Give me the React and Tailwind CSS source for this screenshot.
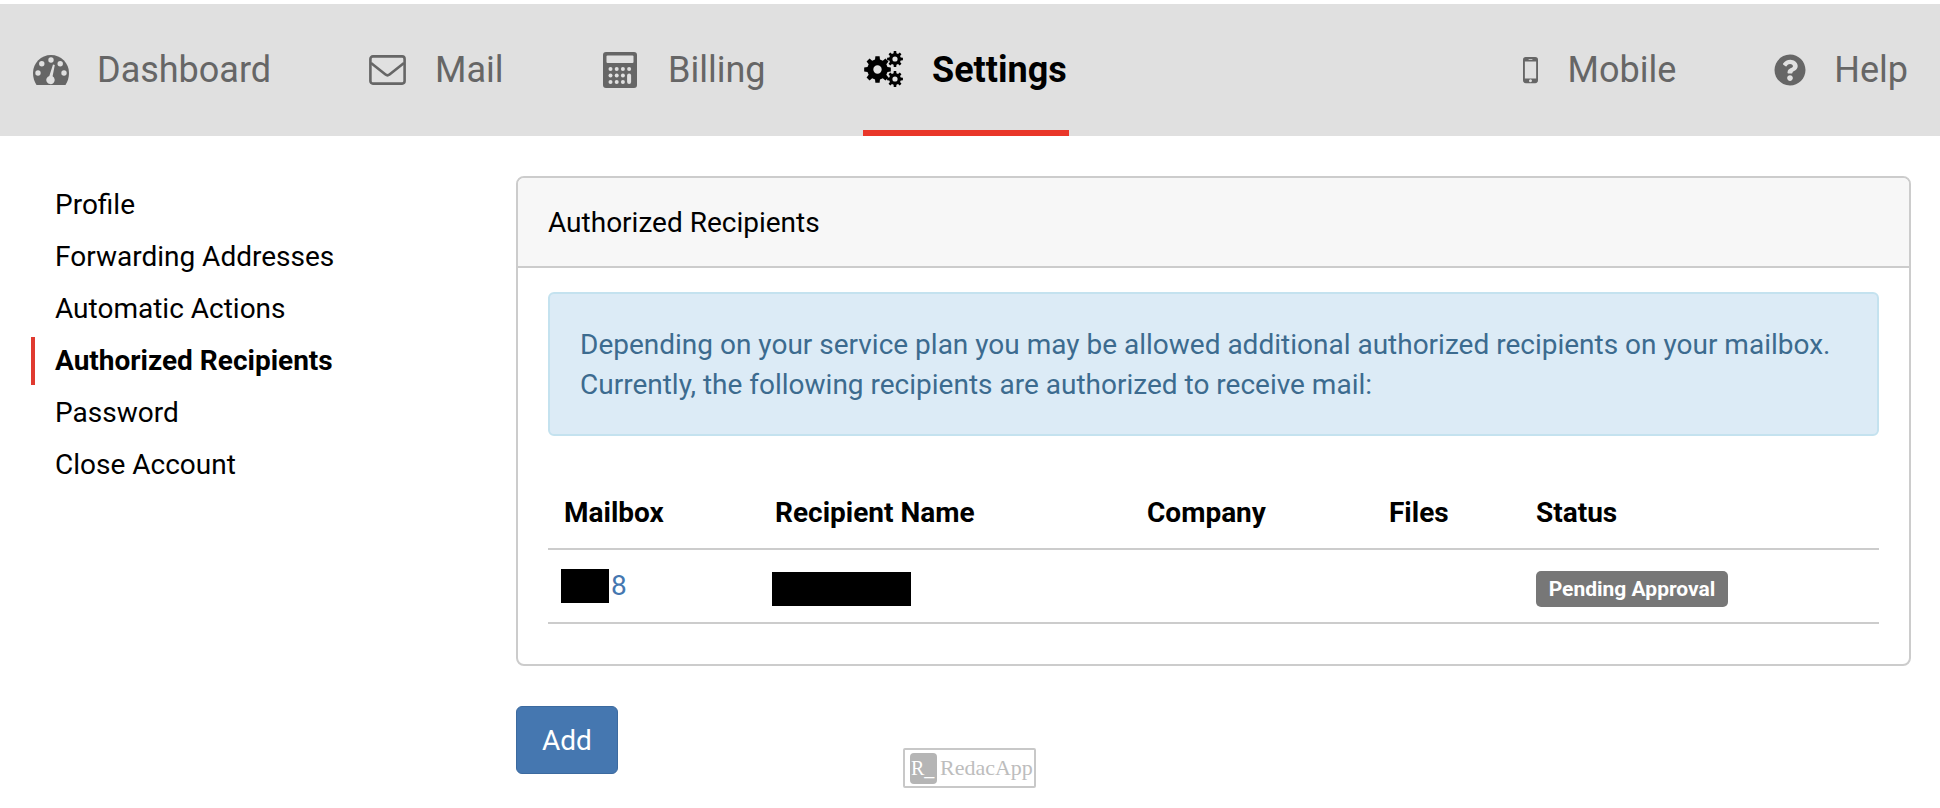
import React from "react";
import { FaQuestionCircle } from "react-icons/fa";

function Gauge() {
  return (
    <svg viewBox="0 0 36 30" className="w-[36px] h-[30px]">
      <path fill="#666" d="M18 0C8 0 0 8 0 18c0 4.500 1.300 8.500 3.500 12h29c2.200-3.500 3.500-7.500 3.500-12C36 8 28 0 18 0z" />
      <g fill="#e0e0e0">
        <circle cx="18" cy="5" r="2.700" />
        <circle cx="8.800" cy="8.800" r="2.700" />
        <circle cx="27.200" cy="8.800" r="2.700" />
        <circle cx="5" cy="18" r="2.700" />
        <circle cx="31" cy="18" r="2.700" />
        <path d="M20 9.500l1.800.5-2.200 11.300a4.200 4.200 0 1 1-3.300-.4z" />
      </g>
    </svg>
  );
}

function Envelope() {
  return (
    <svg viewBox="0 0 37 30" className="w-[37px] h-[30px]">
      <rect x="1.400" y="1.400" width="34.200" height="27.200" rx="2.500" fill="none" stroke="#666" strokeWidth="2.600" />
      <path d="M2 8l14.500 11.500a3.200 3.200 0 0 0 4 0L35 8" fill="none" stroke="#666" strokeWidth="2.600" />
    </svg>
  );
}

function Calc() {
  const dots = [];
  const xs = [7.500, 13.700, 19.900, 26.100];
  const ys = [17, 23.500, 30];
  ys.forEach((y) => xs.forEach((x, i) => {
    if (i === 3 && y !== ys[0]) return;
    dots.push(<circle key={x + "-" + y} cx={x} cy={y} r="2" fill="#e0e0e0" />);
  }));
  return (
    <svg viewBox="0 0 34 36" className="w-[34px] h-[36px]">
      <rect x="0" y="0" width="34" height="36" rx="3" fill="#666" />
      <rect x="3.500" y="3.500" width="27" height="7.500" rx="1" fill="#e0e0e0" />
      {dots}
      <rect x="24.100" y="21.500" width="4" height="10.500" rx="2" fill="#e0e0e0" />
    </svg>
  );
}

function Phone() {
  return (
    <svg viewBox="0 0 16 28" className="w-[15px] h-[28px]">
      <path fillRule="evenodd" fill="#666" d="M3 0h10a3 3 0 0 1 3 3v22a3 3 0 0 1-3 3H3a3 3 0 0 1-3-3V3a3 3 0 0 1 3-3zM2 5v18h12V5zM6 2.200v.9h4v-.9zM8 23.800a1.600 1.600 0 1 0 0 3.200 1.600 1.600 0 0 0 0-3.200z" />
    </svg>
  );
}

function gear(cx, cy, R, r, hole, teeth) {
  let d = "";
  const step = (Math.PI * 2) / teeth;
  for (let i = 0; i < teeth; i++) {
    const a = i * step;
    const w = step * 0.2;
    const pts = [
      [r, a - step * 0.31],
      [R, a - w],
      [R, a + w],
      [r, a + step * 0.31],
    ];
    pts.forEach(([rad, t], j) => {
      const x = (cx + rad * Math.cos(t)).toFixed(2);
      const y = (cy + rad * Math.sin(t)).toFixed(2);
      d += (i === 0 && j === 0 ? "M" : "L") + x + " " + y;
    });
  }
  d += "Z";
  d += `M${cx + hole} ${cy}a${hole} ${hole} 0 1 0 ${-2 * hole} 0a${hole} ${hole} 0 1 0 ${2 * hole} 0Z`;
  return d;
}

function Gears() {
  return (
    <svg viewBox="0 0 39 36" className="w-[39px] h-[36px]">
      <path fillRule="evenodd" fill="#000" d={gear(13.5, 18.500, 13.500, 10.300, 4.200, 8)} />
      <path fillRule="evenodd" fill="#000" d={gear(31, 8, 8, 5.900, 2.600, 8)} />
      <path fillRule="evenodd" fill="#000" d={gear(31, 28, 8, 5.900, 2.600, 8)} />
    </svg>
  );
}

function NavItem({ icon, label, active, className = "" }) {
  return (
    <div className={"h-full flex items-center relative " + className}>
      <span className="flex items-center justify-center">{icon}</span>
      <span className={active ? "font-bold text-black" : "text-[#666]"}>{label}</span>
      {active && <span className="absolute left-0 right-0 bottom-0 h-[6px] bg-[#e93629]" />}
    </div>
  );
}

const side = ["Profile", "Forwarding Addresses", "Automatic Actions", "Authorized Recipients", "Password", "Close Account"];

export default function App() {
  return (
    <div className="w-[1940px] h-[808px] overflow-hidden bg-white pt-[4px] text-black text-[28px] leading-[32px]" style={{ fontFamily: "Roboto, sans-serif" }}>
      <nav className="h-[132px] bg-[#e0e0e0] flex items-center text-[36px] pl-[33px]">
        <NavItem label="Dashboard" icon={<span className="mr-[28px] flex"><Gauge /></span>} className="w-[336px]" />
        <NavItem label="Mail" icon={<span className="mr-[29px] flex"><Envelope /></span>} className="w-[234px]" />
        <NavItem label="Billing" icon={<span className="mr-[31px] flex"><Calc /></span>} className="w-[260px]" />
        <NavItem active label="Settings" icon={<span className="ml-[1px] mr-[29px] flex -mt-[2px]"><Gears /></span>} className="w-[206px]" />
        <div className="flex-1" />
        <NavItem label="Mobile" icon={<span className="mr-[29px] flex"><Phone /></span>} className="mr-[98px]" />
        <NavItem label="Help" icon={<FaQuestionCircle className="text-[#666] w-[32px] h-[32px] mr-[28px]" />} className="mr-[32px]" />
      </nav>
      <div className="flex pl-[31px] pt-[40px]">
        <aside className="w-[485px] pt-[3px]">
          {side.map((s) => {
            const a = s === "Authorized Recipients";
            return (
              <div key={s} className="h-[52px] flex items-center">
                <div className={"flex items-center h-[48px] " + (a ? "font-bold border-l-[4px] border-[#e03a30] pl-[20px]" : "pl-[24px]")}>{s}</div>
              </div>
            );
          })}
        </aside>
        <main className="w-[1395px]">
          <section className="border-2 border-[#cccccc] rounded-[8px] h-[490px]">
            <div className="h-[90px] bg-[#f7f7f7] border-b-2 border-[#cccccc] flex items-center pl-[30px] pt-[2px] rounded-t-[6px]">Authorized Recipients</div>
            <div className="px-[30px] pt-[24px]">
              <div className="h-[144px] bg-[#dcebf6] border-2 border-[#c4e2ef] rounded-[6px] pl-[30px] pt-[31px] text-[#3c6b8f] leading-[40px]">
                <div>Depending on your service plan you may be allowed additional authorized recipients on your mailbox.</div>
                <div>Currently, the following recipients are authorized to receive mail:</div>
              </div>
              <div className="mt-[43px] h-[71px] border-b-2 border-[#cccccc] flex items-center font-bold pb-[2px]">
                <div className="w-[227px] pl-[16px]">Mailbox</div>
                <div className="w-[372px]">Recipient Name</div>
                <div className="w-[242px]">Company</div>
                <div className="w-[147px]">Files</div>
                <div>Status</div>
              </div>
              <div className="h-[74px] border-b-2 border-[#cccccc] flex items-center pt-[4px]">
                <div className="w-[224px] pl-[13px] flex items-center text-[#4577b0] -mt-[4px]">
                  <span className="w-[48px] h-[34px] bg-black inline-block" />
                  <span className="ml-[2px]">8</span>
                </div>
                <div className="w-[375px] mt-[1px]"><div className="w-[139px] h-[34px] bg-black" /></div>
                <div className="w-[242px]" />
                <div className="w-[147px]" />
                <div className="w-[192px] h-[36px] mt-[1px] bg-[#777777] rounded-[5px] text-white font-bold text-[21px] flex items-center justify-center">Pending Approval</div>
              </div>
            </div>
          </section>
          <button className="mt-[40px] w-[102px] h-[68px] pt-[1px] bg-[#4577b0] border border-[#3c6a9f] rounded-[6px] text-white">Add</button>
        </main>
      </div>
      <div className="absolute left-[903px] top-[748px] w-[133px] h-[40px] border-2 border-[#c8c8c8] rounded-[2px] flex items-center pl-[5px] gap-[3px] bg-white">
        <span className="w-[27px] h-[31px] rounded-[4px] bg-[#b5b5b5] text-white text-[20px] leading-[30px] pl-[1px]" style={{ fontFamily: "'Liberation Serif', serif" }}>R_</span>
        <span className="text-[#bdbdbd] text-[22px]" style={{ fontFamily: "'Liberation Serif', serif" }}>RedacApp</span>
      </div>
    </div>
  );
}
